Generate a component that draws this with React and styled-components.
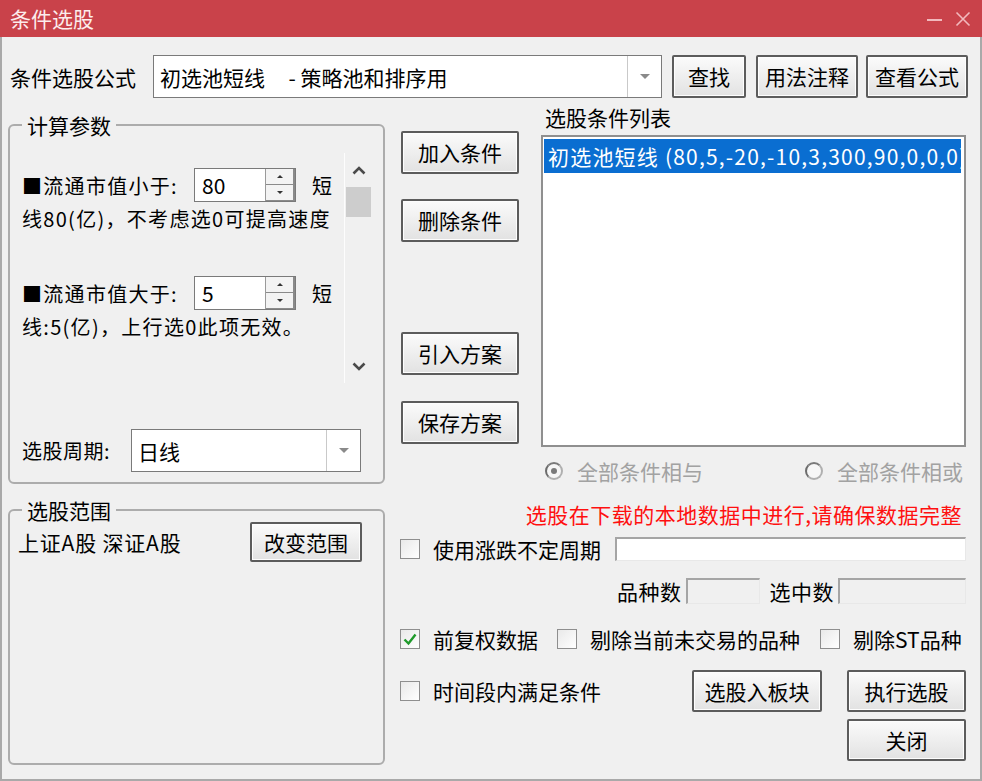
import React from "react";
import styled, { createGlobalStyle } from "styled-components";

const font = `"Noto Sans CJK SC", "Microsoft YaHei", "Noto Sans", sans-serif`;

const GlobalStyle = createGlobalStyle`
    html, body {
        margin: 0;
        padding: 0;
        background: #f0f0f0;
    }
    body {
        font-family: ${font};
        font-size: 21px;
        color: #000;
    }
    * {
        box-sizing: border-box;
    }
`;

const Window = styled.div`
    width: 982px;
    height: 781px;
    display: flex;
    flex-direction: column;
    overflow: hidden;
`;

const TitleBar = styled.div`
    height: 37px;
    flex: none;
    background: #c9424a;
    display: flex;
    align-items: center;
    padding: 0 10px;
    color: #fcecec;
    font-size: 21px;
    line-height: 37px;
`;

const TitleText = styled.div`
    flex: 1;
`;

const TitleIcons = styled.div`
    display: flex;
    align-items: center;
    gap: 12px;
    margin-right: 1px;
`;

const Body = styled.div`
    flex: 1;
    border: 2px solid #a9a9a9;
    border-top: none;
    padding: 18px 14px 0 6px;
    display: flex;
    flex-direction: column;
`;

const FormulaRow = styled.div`
    display: flex;
    align-items: center;
    height: 43px;
    margin-right: -2px;
`;

const FormulaLabel = styled.div`
    width: 145px;
    padding-left: 2px;
    white-space: nowrap;
`;

const Combo = styled.div`
    width: ${({ $w }) => $w}px;
    height: ${({ $h }) => $h}px;
    background: #fff;
    border: 1px solid #7a7a7a;
    display: flex;
    flex: none;
`;

const ComboText = styled.div`
    flex: 1;
    display: flex;
    align-items: center;
    padding-left: 6px;
    white-space: pre;
    overflow: hidden;
`;

const ComboArrow = styled.div`
    width: 34px;
    border-left: 1px solid #c9c9c9;
    display: flex;
    align-items: center;
    justify-content: center;

    &::after {
        content: "";
        border-left: 5px solid transparent;
        border-right: 5px solid transparent;
        border-top: 5px solid #8a8a8a;
    }
`;

const Button = styled.button`
    width: ${({ $w }) => $w}px;
    height: ${({ $h }) => $h || 43}px;
    margin-left: ${({ $ml }) => $ml || 0}px;
    margin-top: ${({ $mt }) => $mt || 0}px;
    flex: none;
    padding: 0;
    font-family: ${font};
    font-size: 21px;
    line-height: 1;
    color: #000;
    border: 2px solid #5c5c5c;
    border-radius: 2px;
    background: linear-gradient(#fbfbfb, #e2e2e2);
    box-shadow: inset 0 0 0 1px #fdfdfd;
`;

const Main = styled.div`
    flex: 1;
    margin-top: 7px;
    display: grid;
    grid-template-columns: 377px minmax(0, 1fr);
    column-gap: 15px;
`;

const LeftColumn = styled.div`
    display: flex;
    flex-direction: column;
    padding-top: 8px;
`;

const Group = styled.fieldset`
    margin: 0;
    padding: 0;
    height: ${({ $h }) => $h}px;
    margin-top: ${({ $mt }) => $mt || 0}px;
    border: 2px solid #acacac;
    border-radius: 6px;
    display: flex;
    flex-direction: column;
    min-width: 0;
`;

const Legend = styled.legend`
    margin-left: 12px;
    padding: 0 5px;
    font-size: 21px;
    line-height: 24px;
`;

const ParamArea = styled.div`
    height: 230px;
    margin: 16px 11px 0 2px;
    display: flex;
`;

const ParamContent = styled.div`
    flex: 1;
    padding: 15px 0 0 10px;
    overflow: hidden;
`;

const ParamBlock = styled.div`
    margin-bottom: 42px;
`;

const ParamLine = styled.div`
    display: flex;
    align-items: center;
    height: ${({ $h }) => $h}px;
    white-space: nowrap;
    font-size: 20px;
    letter-spacing: 1.3px;
`;

const ParamLabel = styled.div`
    width: 172px;
    white-space: nowrap;
`;

const Unit = styled.div`
    margin-left: 16px;
`;

const Spinner = styled.div`
    display: flex;
    width: 102px;
    height: 34px;
    border: 1px solid #7a7a7a;
    background: #fff;
    letter-spacing: 0;
`;

const SpinValue = styled.div`
    flex: 1;
    display: flex;
    align-items: center;
    padding-left: 7px;
    font-size: 21px;
`;

const SpinButtons = styled.div`
    width: 30px;
    display: flex;
    flex-direction: column;
    border-left: 1px solid #9a9a9a;
`;

const SpinButton = styled.div`
    flex: 1;
    background: #f3f3f3;
    border-bottom: 1px solid #8a8a8a;
    border-right: 2px solid #8a8a8a;
    display: flex;
    align-items: center;
    justify-content: center;

    &::after {
        content: "";
        border-left: 3px solid transparent;
        border-right: 3px solid transparent;
        ${({ $down }) =>
            $down ? `border-top: 3px solid #333;` : `border-bottom: 3px solid #333;`}
    }
`;

const Scrollbar = styled.div`
    width: 28px;
    border-left: 1px solid #fdfdfd;
    display: flex;
    flex-direction: column;
    align-items: center;
`;

const ScrollArrow = styled.div`
    height: 34px;
    width: 100%;
    display: flex;
    align-items: center;
    justify-content: center;
`;

const ScrollThumb = styled.div`
    width: 25px;
    height: 30px;
    background: #cdcdcd;
`;

const ScrollTrack = styled.div`
    flex: 1;
`;

const PeriodRow = styled.div`
    display: flex;
    align-items: center;
    margin: 46px 0 0 12px;
`;

const PeriodLabel = styled.div`
    width: 109px;
    font-size: 20px;
    letter-spacing: 0.5px;
`;

const RangeRow = styled.div`
    display: flex;
    align-items: center;
    justify-content: space-between;
    height: 40px;
    padding: 0 21px 0 8px;
`;

const RangeText = styled.span`
    letter-spacing: 0.8px;
`;

const RightColumn = styled.div`
    display: flex;
    flex-direction: column;
    min-width: 0;
`;

const Upper = styled.div`
    display: grid;
    grid-template-columns: 120px minmax(0, 1fr);
    column-gap: 21px;
`;

const ButtonColumn = styled.div`
    display: flex;
    flex-direction: column;
`;

const ListColumn = styled.div`
    display: flex;
    flex-direction: column;
    min-width: 0;
`;

const ListLabel = styled.div`
    height: 24px;
    line-height: 24px;
    padding-left: 4px;
`;

const ListBox = styled.div`
    margin-top: 6px;
    height: 312px;
    background: #fff;
    border: 2px solid #8f8f8f;
    padding: 2px 3px 2px 1px;
    overflow: hidden;
`;

const ListItem = styled.div`
    height: 34px;
    line-height: 34px;
    background: ${({ $selected }) => ($selected ? "#0a6ed1" : "transparent")};
    color: ${({ $selected }) => ($selected ? "#fff" : "#000")};
    padding-left: 4px;
    white-space: nowrap;
    overflow: hidden;
    letter-spacing: 1.2px;
`;

const RadioRow = styled.div`
    display: flex;
    height: 22px;
    margin-top: 13px;
    color: #a2a2a2;
`;

const RadioItem = styled.div`
    width: ${({ $w }) => $w}px;
    display: flex;
    align-items: center;
    gap: 14px;
    padding-left: 4px;
    white-space: nowrap;
`;

const RadioCircle = styled.span`
    width: 18px;
    height: 18px;
    flex: none;
    border-radius: 50%;
    border: 2px solid #b0b0b0;
    border-left-color: #6c6c6c;
    border-top-color: #7a7a7a;
    background: #f7f7f7;
    display: flex;
    align-items: center;
    justify-content: center;

    &::after {
        content: "";
        width: 6px;
        height: 6px;
        border-radius: 50%;
        background: ${({ $checked }) => ($checked ? "#7a7a7a" : "transparent")};
    }
`;

const Notice = styled.div`
    margin-top: 21px;
    height: 22px;
    line-height: 22px;
    text-align: right;
    padding-right: 4px;
    color: #ff1010;
    white-space: nowrap;
    letter-spacing: 0.5px;
`;

const Row = styled.div`
    display: flex;
    align-items: center;
    height: ${({ $h }) => $h}px;
    margin-top: ${({ $mt }) => $mt}px;
    justify-content: ${({ $justify }) => $justify || "flex-start"};
`;

const CheckItem = styled.label`
    display: flex;
    align-items: center;
    gap: 13px;
    margin-right: ${({ $mr }) => $mr || 0}px;
    white-space: nowrap;
`;

const CheckBox = styled.span`
    width: 20px;
    height: 20px;
    flex: none;
    border: 1px solid #8e8e8e;
    background: linear-gradient(135deg, #e9e9e9, #ffffff);
    display: flex;
    align-items: center;
    justify-content: center;
`;

const TextField = styled.div`
    flex: ${({ $w }) => ($w ? "none" : 1)};
    width: ${({ $w }) => ($w ? `${$w}px` : "auto")};
    height: ${({ $h }) => $h}px;
    background: ${({ $white }) => ($white ? "#fff" : "#f0f0f0")};
    border-top: 2px solid #a5a5a5;
    border-left: 2px solid #a5a5a5;
    border-right: 1px solid #e8e8e8;
    border-bottom: 1px solid #e8e8e8;
    margin-left: ${({ $ml }) => $ml || 0}px;
`;

const CountLabel = styled.div`
    margin-left: ${({ $ml }) => $ml || 0}px;
    margin-right: 4px;
    letter-spacing: 0.5px;
`;

const Spacer = styled.div`
    flex: 1;
`;

function Chevron({ down }) {
    return (
        <svg width="14" height="9" viewBox="0 0 14 9">
            <polyline
                points={down ? "1.5,1.5 7,7 12.5,1.5" : "1.5,7.5 7,2 12.5,7.5"}
                fill="none"
                stroke="#4a4a4a"
                strokeWidth="2.6"
            />
        </svg>
    );
}

function Check({ checked, label, mr }) {
    return (
        <CheckItem $mr={mr}>
            <CheckBox>
                {checked && (
                    <svg width="16" height="16" viewBox="0 0 16 16">
                        <path d="M2.5 8.5 L6.5 12.5 L13.5 3.5" fill="none" stroke="#1f9a2b" strokeWidth="2.4" />
                    </svg>
                )}
            </CheckBox>
            {label}
        </CheckItem>
    );
}

function Spin({ value }) {
    return (
        <Spinner>
            <SpinValue>{value}</SpinValue>
            <SpinButtons>
                <SpinButton />
                <SpinButton $down />
            </SpinButtons>
        </Spinner>
    );
}

function Param({ label, value, note }) {
    return (
        <ParamBlock>
            <ParamLine $h={34}>
                <ParamLabel>{label}</ParamLabel>
                <Spin value={value} />
                <Unit>短</Unit>
            </ParamLine>
            <ParamLine $h={32}>{note}</ParamLine>
        </ParamBlock>
    );
}

export default function App() {
    return (
        <>
            <GlobalStyle />
            <Window>
                <TitleBar>
                    <TitleText>条件选股</TitleText>
                    <TitleIcons>
                        <svg width="17" height="14" viewBox="0 0 17 14">
                            <line x1="1" y1="8" x2="16" y2="8" stroke="#f2b9bd" strokeWidth="2" />
                        </svg>
                        <svg width="16" height="16" viewBox="0 0 16 16">
                            <path d="M1.5 1.5 L14.5 14.5 M14.5 1.5 L1.5 14.5" stroke="#f2b9bd" strokeWidth="1.6" />
                        </svg>
                    </TitleIcons>
                </TitleBar>
                <Body>
                    <FormulaRow>
                        <FormulaLabel>条件选股公式</FormulaLabel>
                        <Combo $w={509} $h={43}>
                            <ComboText>{"初选池短线     - 策略池和排序用"}</ComboText>
                            <ComboArrow />
                        </Combo>
                        <Button $w={74} $ml={10}>查找</Button>
                        <Button $w={102} $ml={10}>用法注释</Button>
                        <Button $w={102} $ml={8}>查看公式</Button>
                    </FormulaRow>

                    <Main>
                        <LeftColumn>
                            <Group $h={371}>
                                <Legend>计算参数</Legend>
                                <ParamArea>
                                    <ParamContent>
                                        <Param label="■流通市值小于:" value="80" note="线80(亿)，不考虑选0可提高速度" />
                                        <Param label="■流通市值大于:" value="5" note="线:5(亿)，上行选0此项无效。" />
                                    </ParamContent>
                                    <Scrollbar>
                                        <ScrollArrow>
                                            <Chevron />
                                        </ScrollArrow>
                                        <ScrollThumb />
                                        <ScrollTrack />
                                        <ScrollArrow>
                                            <Chevron down />
                                        </ScrollArrow>
                                    </Scrollbar>
                                </ParamArea>
                                <PeriodRow>
                                    <PeriodLabel>选股周期:</PeriodLabel>
                                    <Combo $w={230} $h={43}>
                                        <ComboText>日线</ComboText>
                                        <ComboArrow />
                                    </Combo>
                                </PeriodRow>
                            </Group>
                            <Group $h={267} $mt={14}>
                                <Legend>选股范围</Legend>
                                <RangeRow>
                                    <RangeText>上证A股 深证A股</RangeText>
                                    <Button $w={112} $h={40}>改变范围</Button>
                                </RangeRow>
                            </Group>
                        </LeftColumn>

                        <RightColumn>
                            <Upper>
                                <ButtonColumn>
                                    <Button $w={118} $ml={1} $mt={26}>加入条件</Button>
                                    <Button $w={118} $ml={1} $mt={25}>删除条件</Button>
                                    <Button $w={118} $ml={1} $mt={90}>引入方案</Button>
                                    <Button $w={118} $ml={1} $mt={26}>保存方案</Button>
                                </ButtonColumn>
                                <ListColumn>
                                    <ListLabel>选股条件列表</ListLabel>
                                    <ListBox>
                                        <ListItem $selected>初选池短线 (80,5,-20,-10,3,300,90,0,0,0)</ListItem>
                                    </ListBox>
                                    <RadioRow>
                                        <RadioItem $w={260}>
                                            <RadioCircle $checked />
                                            全部条件相与
                                        </RadioItem>
                                        <RadioItem $w={165}>
                                            <RadioCircle />
                                            全部条件相或
                                        </RadioItem>
                                    </RadioRow>
                                </ListColumn>
                            </Upper>

                            <Notice>选股在下载的本地数据中进行,请确保数据完整</Notice>

                            <Row $h={24} $mt={12}>
                                <Check label="使用涨跌不定周期" />
                                <TextField $h={24} $ml={14} $white />
                            </Row>

                            <Row $h={26} $mt={17} $justify="flex-end">
                                <CountLabel>品种数</CountLabel>
                                <TextField $w={74} $h={26} />
                                <CountLabel $ml={10}>选中数</CountLabel>
                                <TextField $w={128} $h={26} />
                            </Row>

                            <Row $h={24} $mt={23}>
                                <Check checked label="前复权数据" mr={19} />
                                <Check label="剔除当前未交易的品种" mr={20} />
                                <Check label="剔除ST品种" />
                            </Row>

                            <Row $h={42} $mt={19}>
                                <Check label="时间段内满足条件" />
                                <Spacer />
                                <Button $w={130} $h={42}>选股入板块</Button>
                                <Button $w={119} $h={42} $ml={25}>执行选股</Button>
                            </Row>

                            <Row $h={42} $mt={7} $justify="flex-end">
                                <Button $w={119} $h={42}>关闭</Button>
                            </Row>
                        </RightColumn>
                    </Main>
                </Body>
            </Window>
        </>
    );
}
